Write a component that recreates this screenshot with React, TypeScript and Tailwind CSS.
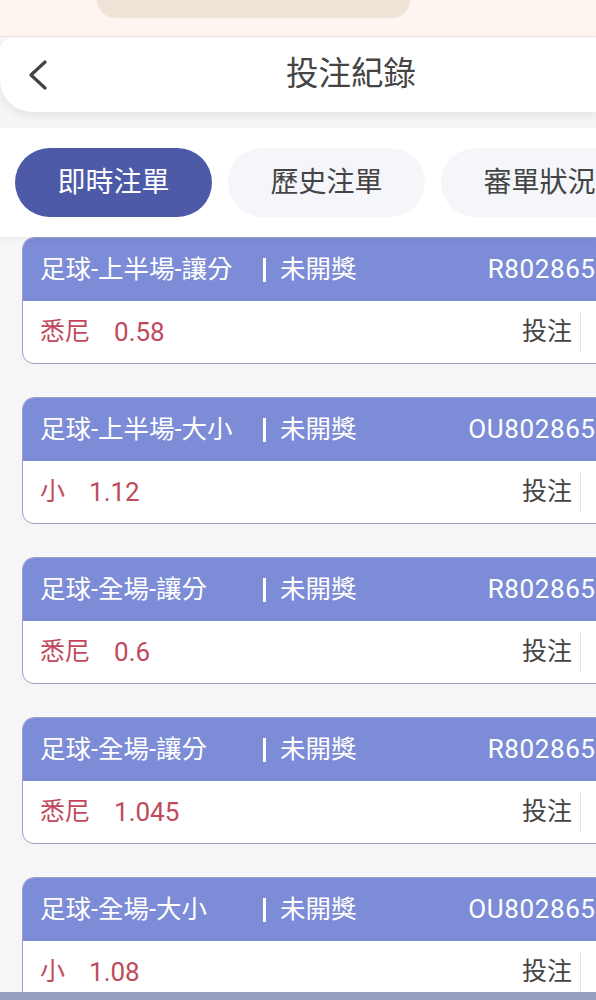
type Bet = {
  title: string;
  pick: string;
  odds: string;
  id: string;
};

const bets: Bet[] = [
  { title: "足球-上半場-讓分", pick: "悉尼", odds: "0.58", id: "R80286512" },
  { title: "足球-上半場-大小", pick: "小", odds: "1.12", id: "OU80286512" },
  { title: "足球-全場-讓分", pick: "悉尼", odds: "0.6", id: "R80286524" },
  { title: "足球-全場-讓分", pick: "悉尼", odds: "1.045", id: "R80286537" },
  { title: "足球-全場-大小", pick: "小", odds: "1.08", id: "OU80286541" },
];

const tabs = ["即時注單", "歷史注單", "審單狀況"];

function BetCard({ bet }: { bet: Bet }) {
  return (
    <div className="ml-[22px] w-[620px] shrink-0 rounded-l-[12px] border-[1.5px] border-[#9aa0c8] bg-white overflow-hidden">
      {/* header strip */}
      <div className="flex h-[63px] items-center bg-[#7d8cd6] pl-[17px] text-[25.5px] text-white">
        <span className="w-[223px] whitespace-nowrap">{bet.title}</span>
        <span className="mr-[14px] h-[24px] w-[3px] bg-white" />
        <span>未開獎</span>
        <span className="ml-auto pr-[15px] text-[26px] tracking-[0.6px]">{bet.id}</span>
      </div>
      {/* body */}
      <div className="flex h-[62px] items-center pl-[17px] text-[25px]">
        <span className="text-[#c04a5c]">{bet.pick}</span>
        <span className="ml-[24px] text-[26px] text-[#c04a5c]">{bet.odds}</span>
        <span className="ml-auto text-[#444]">投注</span>
        <span className="ml-[8px] mr-[60px] h-[42px] w-px bg-[#e2e2e2]" />
      </div>
    </div>
  );
}

export default function App() {
  return (
    <div
      className="h-[1000px] w-[596px] overflow-hidden bg-[#f6f6f7] flex flex-col"
      style={{ fontFamily: 'Roboto, "Noto Sans CJK TC", sans-serif' }}
    >
      {/* top strip */}
      <div className="h-[37px] shrink-0 border-b border-[#f3e2d8] bg-[#fef5f1]">
        <div className="ml-[97px] h-[18px] w-[313px] rounded-b-[20px] bg-[#efe3d7]" />
      </div>

      {/* nav header */}
      <div className="relative z-10 flex h-[75px] shrink-0 items-center rounded-tl-[14px] rounded-bl-[32px] bg-white shadow-[0_4px_10px_rgba(0,0,0,0.08)]">
        <svg className="ml-[28px] h-[30px] w-[20px]" viewBox="0 0 20 30" fill="none">
          <polyline
            points="17,2 3,15 17,28"
            stroke="#444"
            strokeWidth="3.2"
            strokeLinecap="round"
            strokeLinejoin="round"
          />
        </svg>
        <h1 className="absolute left-0 right-0 pl-[106px] text-center text-[32.5px] font-normal text-[#444]">
          投注紀錄
        </h1>
      </div>

      {/* tabs */}
      <div className="relative z-10 mt-[16px] flex h-[109px] shrink-0 items-center gap-[16px] bg-white pl-[15px] shadow-[0_2px_6px_rgba(0,0,0,0.05)]">
        {tabs.map((t, i) => (
          <div
            key={t}
            className={
              i === 0
                ? "flex h-[69px] w-[197px] shrink-0 items-center justify-center rounded-full bg-[#4d5aa8] text-[28px] text-white"
                : "flex h-[69px] w-[197px] shrink-0 items-center justify-center rounded-full bg-[#f5f6fa] text-[28px] text-[#444]"
            }
          >
            {t}
          </div>
        ))}
      </div>

      {/* list */}
      <div className="flex flex-col gap-[33px]">
        {bets.map((b, i) => (
          <BetCard key={i} bet={b} />
        ))}
      </div>

      {/* bottom bar */}
      <div className="fixed bottom-0 left-0 h-[8px] w-[596px] bg-[#979dc0]" />
    </div>
  );
}
